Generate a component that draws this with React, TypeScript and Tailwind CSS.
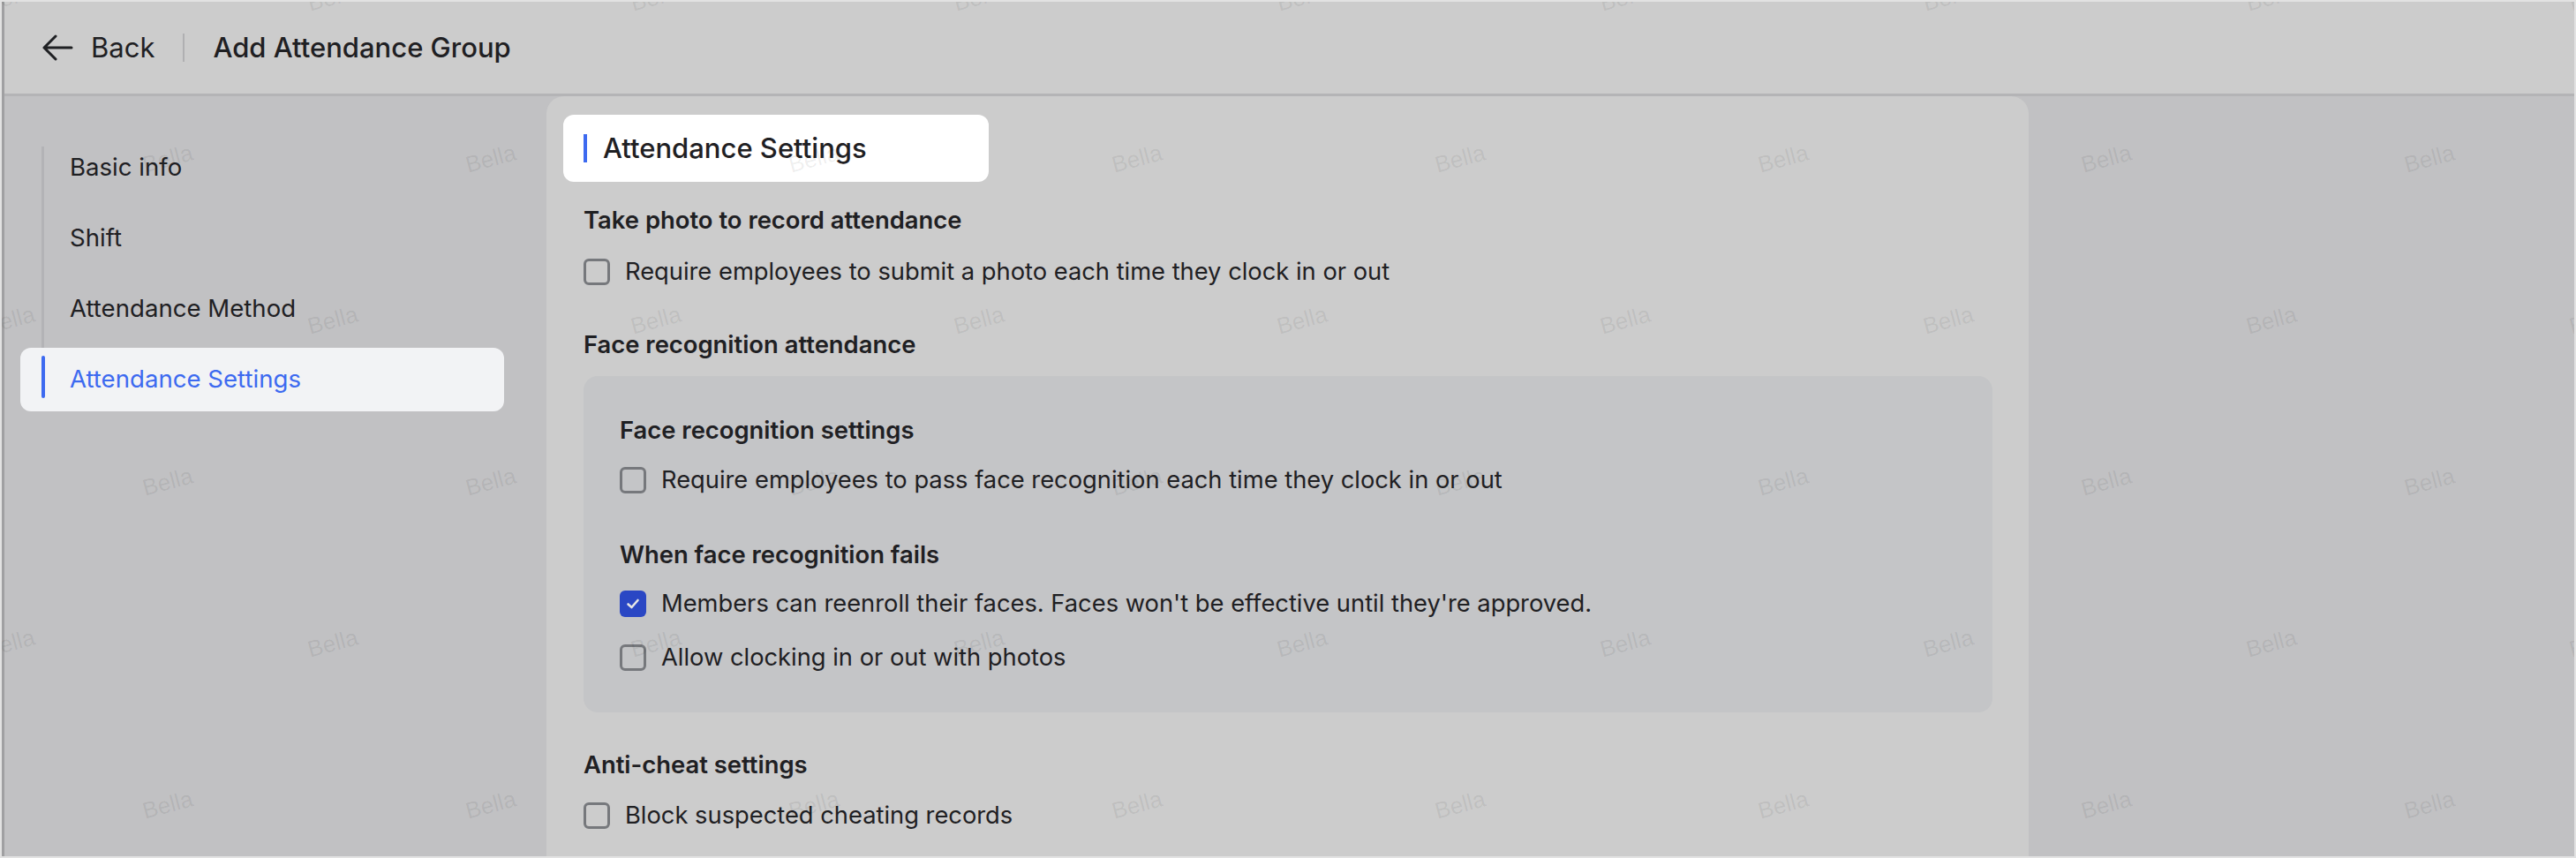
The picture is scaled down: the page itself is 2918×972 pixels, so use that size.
import React from "react";

const font = { fontFamily: "Inter, 'Noto Sans', sans-serif" };

function Checkbox({ checked }: { checked?: boolean }) {
  return checked ? (
    <span className="flex h-[30px] w-[30px] shrink-0 items-center justify-center rounded-[6px] bg-[#2a47c4]">
      <svg width="18" height="18" viewBox="0 0 18 18" fill="none">
        <path d="M3.5 9.5 L7.5 13 L14.5 5" stroke="#e6e6e6" strokeWidth="2.6" strokeLinecap="round" strokeLinejoin="round" />
      </svg>
    </span>
  ) : (
    <span className="h-[30px] w-[30px] shrink-0 rounded-[6px] border-[3px] border-[#76787c]" />
  );
}

function Option({ label, checked }: { label: string; checked?: boolean }) {
  return (
    <label className="flex h-[40px] items-center gap-[17px] text-[27.3px] text-[#1f2023]">
      <Checkbox checked={checked} />
      <span>{label}</span>
    </label>
  );
}

function Heading({ children }: { children: React.ReactNode }) {
  return <h3 className="h-[40px] leading-[40px] text-[27.4px] font-semibold text-[#1f2023]">{children}</h3>;
}

const navItems = ["Basic info", "Shift", "Attendance Method", "Attendance Settings"];

function Watermarks() {
  const rows = [0, 1, 2, 3, 4, 5];
  const cols = [0, 1, 2, 3, 4, 5, 6, 7, 8];
  return (
    <div className="pointer-events-none absolute inset-0 overflow-hidden">
      {rows.map((r) =>
        cols.map((c) => (
          <span
            key={`${r}-${c}`}
            className="absolute -translate-x-1/2 -translate-y-1/2 -rotate-[15deg] text-[26px] text-black/[0.07]"
            style={{
              left: (r % 2 === 0 ? 9 : 188) + c * 366,
              top: -5 + r * 183,
              fontFamily: "'Liberation Sans', Arial, sans-serif",
            }}
          >
            Bella
          </span>
        ))
      )}
    </div>
  );
}

export default function App() {
  return (
    <div className="relative h-[972px] w-[2918px] overflow-hidden border-2 border-[#e2e2e2] bg-[#dcdcdc]" style={font}>
      <div className="flex h-full flex-col border-l-[3px] border-[#a0a0a2] bg-[#c1c1c3]">
        {/* header */}
        <header className="flex h-[107px] shrink-0 items-center border-b-[3px] border-[#b4b4b6] bg-[#cccccc] pl-[42px]">
          <button className="flex items-center gap-[20px] text-[31px] text-[#1f2023]">
            <svg width="36" height="30" viewBox="0 0 36 30" fill="none">
              <path d="M3 15 H34 M16 2 L3 15 L16 28" stroke="#1f2023" strokeWidth="3" strokeLinecap="round" strokeLinejoin="round" />
            </svg>
            Back
          </button>
          <span className="mx-[32px] h-[32px] w-[2px] bg-[#b0b0b2]" />
          <h1 className="text-[31px] font-medium text-[#1f2023]">Add Attendance Group</h1>
        </header>

        <div className="flex min-h-0 flex-1">
          {/* sidebar */}
          <nav className="w-[614px] shrink-0 pl-[18px] pt-[45px]">
            <div className="relative flex w-[548px] flex-col gap-[8px]">
              <span className="absolute left-[24px] top-[12px] h-[288px] w-[3px] bg-[#b3b3b6]" />
              {navItems.map((item) => {
                const active = item === "Attendance Settings";
                return (
                  <div
                    key={item}
                    className={`relative flex h-[72px] items-center rounded-[12px] pl-[56px] text-[27.6px] ${
                      active ? "bg-[#f2f3f5] text-[#3d6af0]" : "text-[#1f2023]"
                    }`}
                  >
                    {active && <span className="absolute left-[24px] top-[9px] h-[48px] w-[4px] rounded-full bg-[#3d6af0]" />}
                    {item}
                  </div>
                );
              })}
            </div>
          </nav>

          {/* card */}
          <main className="w-[1679px] shrink-0 rounded-t-[20px] bg-[#cccccc] pl-[19px] pr-[41px] pt-[21px]">
            <div className="flex h-[76px] w-[482px] items-center gap-[18px] rounded-[12px] bg-white pl-[23px]">
              <span className="h-[32px] w-[4px] bg-[#3d6af0]" />
              <h2 className="text-[31px] font-medium text-[#1f2023]">Attendance Settings</h2>
            </div>

            <div className="pl-[23px]">
              <div className="mt-[23px] flex flex-col gap-[19px]">
                <Heading>Take photo to record attendance</Heading>
                <Option label="Require employees to submit a photo each time they clock in or out" />
              </div>

              <div className="mt-[42px] flex flex-col">
                <Heading>Face recognition attendance</Heading>
                <div className="mt-[16px] rounded-[16px] bg-[#c4c5c7] pb-[42px] pl-[41px] pt-[41px]">
                  <div className="flex flex-col gap-[17px]">
                    <Heading>Face recognition settings</Heading>
                    <Option label="Require employees to pass face recognition each time they clock in or out" />
                  </div>
                  <div className="mt-[44px] flex flex-col gap-[16px]">
                    <Heading>When face recognition fails</Heading>
                    <Option checked label="Members can reenroll their faces. Faces won't be effective until they're approved." />
                    <div className="mt-[5px]">
                      <Option label="Allow clocking in or out with photos" />
                    </div>
                  </div>
                </div>
              </div>

              <div className="mt-[39px] flex flex-col gap-[18px]">
                <Heading>Anti-cheat settings</Heading>
                <Option label="Block suspected cheating records" />
              </div>
            </div>
          </main>
        </div>
      </div>
      <Watermarks />
    </div>
  );
}
